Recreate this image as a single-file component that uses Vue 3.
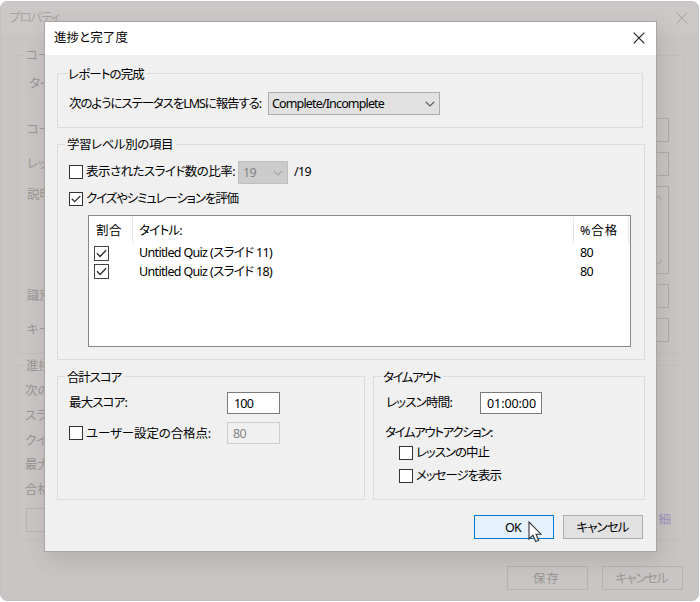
<script setup>
import { ref } from 'vue'

// Tracks a label evenly so that it occupies the given width in pixels.
const vFit = {
  mounted(el, { value }) {
    const count = [...el.textContent].length
    const natural = el.getBoundingClientRect().width
    el.style.letterSpacing = (value - natural) / count + 'px'
  }
}

const quizzes = ref([
  { title: 'Untitled Quiz (スライド 11)', pass: 80 },
  { title: 'Untitled Quiz (スライド 18)', pass: 80 }
])
const summary = ['次の', 'スラ', 'クイ', '最大', '合格']
</script>

<template>
  <div class="screen">
    <div class="window">
      <header class="win-title">
        <span v-fit="50">プロパティ</span>
        <svg class="close" viewBox="0 0 12 12"><path d="M.7.7l10.6 10.6M11.3.7L.7 11.3" /></svg>
      </header>
      <section class="back-group course">
        <div class="back-legend">コー</div>
        <div class="back-row plain">タイ</div>
        <div class="back-row">コー<i class="field"></i></div>
        <div class="back-row">レッ<i class="field"></i></div>
        <div class="back-row tall">
          説明
          <i class="field">
            <svg viewBox="0 0 10 6"><path d="M1 5l4-4 4 4" /></svg>
            <svg viewBox="0 0 10 6"><path d="M1 1l4 4 4-4" /></svg>
          </i>
        </div>
        <div class="back-row ident">識別<i class="field"></i></div>
        <div class="back-row">キー<i class="field"></i></div>
      </section>
      <section class="back-group progress">
        <div class="back-legend">進捗</div>
        <div v-for="s in summary" :key="s" class="sum-row">{{ s }}</div>
        <div class="link-row"><i class="back-button"></i><span class="link">細</span></div>
      </section>
      <footer class="win-footer">
        <div class="back-button"><span v-fit="27">保存</span></div>
        <div class="back-button"><span v-fit="52">キャンセル</span></div>
      </footer>
    </div>

    <div class="dialog">
      <header class="title">
        <span v-fit="74">進捗と完了度</span>
        <svg class="close" viewBox="0 0 12 12"><path d="M.7.7l10.6 10.6M11.3.7L.7 11.3" /></svg>
      </header>
      <main class="body">
        <section class="group report">
          <div class="legend"><span v-fit="76">レポートの完成</span></div>
          <div class="row">
            <span class="label status"><span v-fit="192">次のようにステータスをLMSに報告する:</span></span>
            <div class="select">
              <span v-fit="112">Complete/Incomplete</span>
              <svg viewBox="0 0 10 6"><path d="M.8.8L5 5 9.2.8" /></svg>
            </div>
          </div>
        </section>

        <section class="group levels">
          <div class="legend"><span v-fit="106">学習レベル別の項目</span></div>
          <div class="row slides">
            <i class="check"></i>
            <span class="label ratio"><span v-fit="149">表示されたスライド数の比率:</span></span>
            <div class="select off">
              <span v-fit="13">19</span>
              <svg viewBox="0 0 10 6"><path d="M.8.8L5 5 9.2.8" /></svg>
            </div>
            <span class="total"><span v-fit="17">/19</span></span>
          </div>
          <div class="row evaluate">
            <i class="check"><svg viewBox="0 0 12 12"><path d="M1.8 5.8L4.7 8.7 10.3 3" /></svg></i>
            <span v-fit="152">クイズやシミュレーションを評価</span>
          </div>
          <div class="list">
            <div class="line head">
              <span class="c1"><span v-fit="26">割合</span></span>
              <span class="c2"><span v-fit="43">タイトル:</span></span>
              <span class="c3"><span v-fit="38">%合格</span></span>
            </div>
            <div v-for="q in quizzes" :key="q.title" class="line">
              <span class="c1"><i class="check"><svg viewBox="0 0 12 12"><path d="M1.8 5.8L4.7 8.7 10.3 3" /></svg></i></span>
              <span class="c2"><span v-fit="133">{{ q.title }}</span></span>
              <span class="c3"><span v-fit="13">{{ q.pass }}</span></span>
            </div>
          </div>
        </section>

        <div class="pair">
          <section class="group score">
            <div class="legend"><span v-fit="54">合計スコア</span></div>
            <div class="row first">
              <span class="label maxi"><span v-fit="58">最大スコア:</span></span>
              <div class="input"><span v-fit="19">100</span></div>
            </div>
            <div class="row second">
              <i class="check"></i>
              <span class="label custom"><span v-fit="125">ユーザー設定の合格点:</span></span>
              <div class="input off"><span v-fit="13">80</span></div>
            </div>
          </section>
          <section class="group timeout">
            <div class="legend"><span v-fit="57">タイムアウト</span></div>
            <div class="row first">
              <span class="label lesson"><span v-fit="66">レッスン時間:</span></span>
              <div class="input time"><span v-fit="49">01:00:00</span></div>
            </div>
            <div class="row action"><span v-fit="107">タイムアウトアクション:</span></div>
            <div class="row option"><i class="check"></i><span v-fit="73">レッスンの中止</span></div>
            <div class="row option"><i class="check"></i><span v-fit="85">メッセージを表示</span></div>
          </section>
        </div>

        <footer class="buttons">
          <div class="button primary"><span v-fit="16">OK</span></div>
          <div class="button"><span v-fit="52">キャンセル</span></div>
        </footer>
      </main>
    </div>

    <svg class="cursor" viewBox="0 0 14 22">
      <path d="M1 1v17l4-3.7 2.7 6.2 3-1.3L8 13.2h5z" />
    </svg>
  </div>
</template>

<style>
body { background: #fff; overflow: hidden; }
</style>

<style scoped>
* { box-sizing: border-box; }
i { font-style: normal; }
svg { fill: none; flex: none; display: block; }
span { white-space: nowrap; }
.screen {
  position: relative;
  width: 700px;
  height: 602px;
  padding-top: 1px;
  font-family: "Noto Sans", "Noto Sans CJK JP", sans-serif;
  font-size: 12.5px;
  line-height: 18px;
  font-feature-settings: "palt";
  color: #000;
}

/* Window in the background */
.window {
  width: 699px;
  height: 600px;
  border: 1px solid #c5c1c0;
  border-radius: 7px;
  background: #c9c5c4;
  color: #999594;
  overflow: hidden;
}
.win-title {
  height: 32px;
  background: #cbc8c7;
  color: #a9a5a4;
  display: flex;
  align-items: center;
  justify-content: space-between;
  padding: 0 10px 0 8px;
}
.close { width: 12px; height: 12px; }
.win-title .close { stroke: #a5a1a0; }
.back-group { margin: 0 14px 0 16px; border: 1px solid #c3bfbe; }
.course { margin-top: 21px; height: 299px; }
.back-legend {
  width: 40px;
  height: 18px;
  margin: -9px 0 0 6px;
  padding-left: 2px;
  background: #c9c5c4;
}
.back-row {
  height: 24px;
  margin: 10px 14px 0 9px;
  display: flex;
  align-items: center;
}
.back-row.plain { margin: 7px 0 22px 11px; }
.field {
  flex: 1;
  height: 24px;
  margin-left: 12px;
  border: 1px solid #aeaaa9;
}
.tall { height: 88px; align-items: flex-start; }
.tall .field {
  height: 88px;
  display: flex;
  flex-direction: column;
  justify-content: space-between;
  align-items: flex-end;
  padding: 8px 5px;
}
.tall svg { width: 10px; height: 6px; stroke: #b6b2b1; stroke-width: 1.6; }
.progress { margin-top: 11px; height: 175px; }
.progress .back-legend { margin-bottom: 7px; }
.sum-row { height: 18px; margin: 0 0 6.8px 7px; }
.link-row {
  display: flex;
  justify-content: space-between;
  align-items: center;
  margin: 9px 12px 0 8px;
}
.link { color: #9a94bd; }
.back-button {
  width: 81px;
  height: 24px;
  border: 1px solid #b7b3b2;
  display: flex;
  align-items: center;
  justify-content: center;
  padding: 1px 2px 0 0;
}
.win-footer {
  display: flex;
  justify-content: flex-end;
  gap: 14px;
  margin: 26px 15px 0 0;
}

/* Dialog */
.dialog {
  position: absolute;
  left: 44px;
  top: 21px;
  width: 613px;
  height: 531px;
  border: 1px solid #aaa6a5;
  background: #f0f0f0;
  box-shadow: 3px 8px 20px rgba(70, 60, 60, .16);
}
.title {
  height: 33px;
  background: #fff;
  display: flex;
  align-items: center;
  justify-content: space-between;
  padding: 0 11px 2px 9px;
}
.title .close { stroke: #222; stroke-width: 1.2; }
.body { padding: 18px 0 0 12px; }
.group { border: 1px solid #dcdcdc; }
.legend {
  width: max-content;
  height: 18px;
  margin: -8px 0 0 7px;
  padding: 0 3px 0 2px;
  background: #f0f0f0;
}
.row { display: flex; align-items: center; }
.report { width: 586px; height: 55px; }
.report .legend { margin-left: 8px; }
.report .row { height: 23px; margin: 8px 0 0 11px; }
.status { width: 199px; }
.select {
  width: 172px;
  height: 23px;
  border: 1px solid #adadad;
  background: #e1e1e1;
  padding: 1px 4px 0 3px;
  display: flex;
  align-items: center;
  justify-content: space-between;
}
.select svg { width: 10px; height: 6px; stroke: #555; stroke-width: 1.2; }
.select.off {
  width: 50px;
  border-color: #bfbfbf;
  background: #ccc;
  color: #838383;
  padding-left: 4px;
}
.select.off svg { stroke: #a5a5a5; }
.check {
  flex: none;
  width: 14px;
  height: 14px;
  border: 1px solid #333;
  background: #fff;
  margin-right: 3px;
}
.check svg { width: 12px; height: 12px; stroke: #333; stroke-width: 1.3; }

.levels { width: 588px; height: 216px; margin-top: 16px; }
.levels .legend { margin-top: -9px; }
.slides { height: 24px; margin: 6px 0 0 11px; }
.ratio { width: 152px; }
.total { margin-left: 6px; }
.evaluate { height: 18px; margin: 6px 0 0 11px; }
.list {
  width: 543px;
  height: 132px;
  margin: 7px 0 0 30px;
  border: 1px solid #828790;
  background: #fff;
}
.line { display: flex; align-items: center; height: 18.5px; }
.line > span { display: flex; align-items: center; height: 100%; }
.line .check { width: 15px; height: 15px; border-color: #444; }
.line .check svg { width: 13px; height: 13px; }
.c1 { width: 44px; padding-left: 5px; }
.c2 { width: 441px; padding-left: 6px; }
.c3 { width: 55px; padding-left: 6px; }
.head { height: 28px; }
.head > span { height: 26px; padding-top: 2px; border-right: 1px solid #e5e5e5; }
.head .c1 { padding-left: 7px; }

.pair { display: flex; gap: 8px; margin-top: 16px; }
.pair .group { height: 124px; }
.score { width: 308px; }
.timeout { width: 272px; }
.first { height: 22px; margin: 5px 0 0 11px; }
.second { height: 22px; margin: 8px 0 0 11px; }
.maxi { width: 158px; }
.custom { width: 141px; padding-top: 1px; }
.input {
  width: 53px;
  height: 22px;
  padding: 1px 0 0 6px;
  border: 1px solid #7a7a7a;
  background: #fff;
  display: flex;
  align-items: center;
}
.input.off { border-color: #ccc; background: #f0f0f0; color: #838383; padding-left: 5px; }
.input.time { width: 62px; }
.lesson { width: 94px; }
.timeout .row.first { margin-left: 12px; }
.timeout .legend { margin-left: 7px; }
.action { height: 18px; margin: 10px 0 0 11px; }
.option { height: 18px; margin: 2px 0 0 25px; }
.option + .option { margin-top: 5px; }

.buttons { display: flex; gap: 9px; margin: 15px 0 0 417px; }
.button {
  width: 80px;
  height: 24px;
  border: 1px solid #adadad;
  background: #e1e1e1;
  display: flex;
  align-items: center;
  justify-content: center;
  padding: 2px 1px 0 0;
}
.primary { border-color: #0078d7; background: #e5f1fb; padding-right: 2px; }
.cursor {
  position: absolute;
  left: 528px;
  top: 521px;
  width: 14px;
  height: 22px;
  fill: #fff;
  stroke: #31333f;
  stroke-width: 1.1;
}
</style>
